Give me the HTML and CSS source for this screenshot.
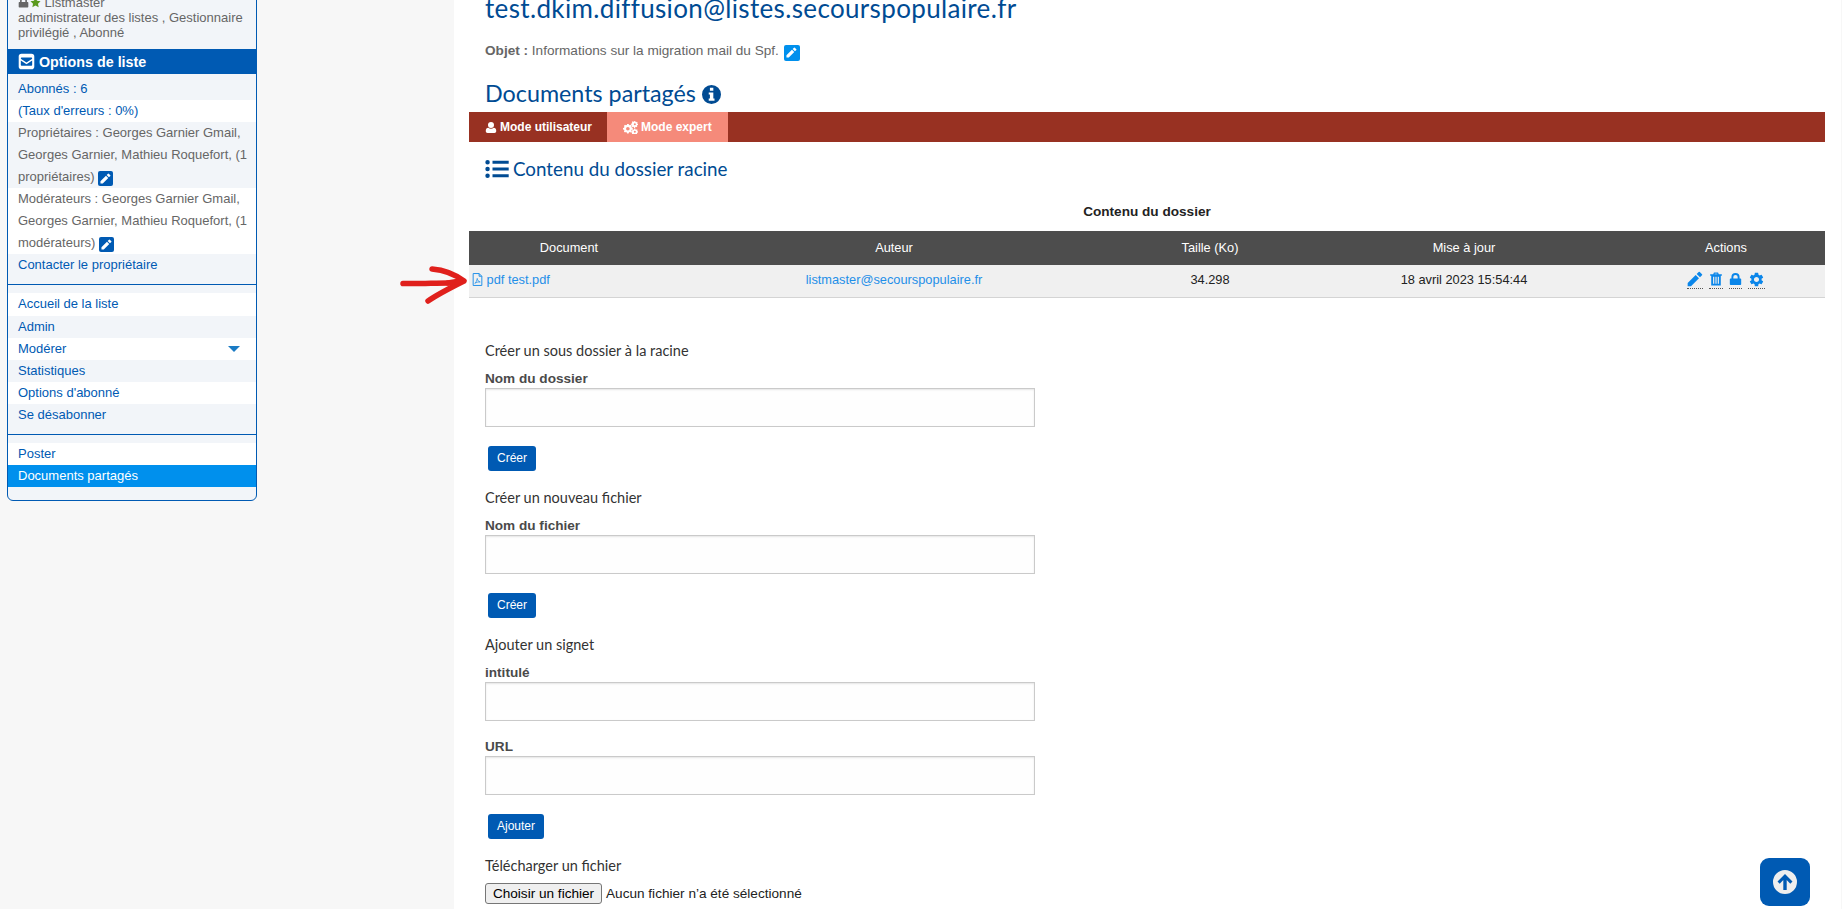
FILE: index.html
```html
<!DOCTYPE html>
<html lang="fr">
<head>
    <meta charset="UTF-8">
    <meta name="viewport" content="width=device-width, initial-scale=1.0">
    <title>Documents partagés</title>
    <link rel="stylesheet" href="styles.css">
</head>
<body>
    <svg class="sprite" xmlns="http://www.w3.org/2000/svg">
        <symbol id="i-pencil" viewBox="0 0 24 24"><path d="M1 18v5h5L18 11l-5-5L1 18zM22.500 6.500a1.200 1.200 0 0 0 0-1.700l-3.300-3.300a1.200 1.200 0 0 0-1.700 0l-3 3 5 5 3-3z"/></symbol>
        <symbol id="i-trash" viewBox="0 0 24 24"><path fill-rule="evenodd" d="M8.500 1h7l1.300 3H22v2.500h-1.800V23H3.800V6.500H2V4h5.200L8.500 1zM10 2.800L9.500 4h5L14 2.800h-4zM7 8v12h2V8H7zm4 0v12h2V8h-2zm4 0v12h2V8h-2z"/></symbol>
        <symbol id="i-lock" viewBox="0 0 24 24"><path fill-rule="evenodd" d="M12 1a7.500 7.500 0 0 1 7.500 7.500V11H21a1.500 1.500 0 0 1 1.500 1.500v9A1.500 1.500 0 0 1 21 23H3a1.500 1.500 0 0 1-1.500-1.500v-9A1.500 1.500 0 0 1 3 11h1.500V8.500A7.500 7.500 0 0 1 12 1zm0 3.500a4 4 0 0 0-4 4V11h8V8.500a4 4 0 0 0-4-4z"/></symbol>
        <symbol id="i-cog" viewBox="0 0 24 24"><path d="M19.140 12.940c.04-.3.06-.61.06-.94 0-.32-.02-.64-.07-.94l2.030-1.580a.49.49 0 0 0 .12-.61l-1.920-3.320a.49.49 0 0 0-.59-.22l-2.390.96c-.5-.38-1.030-.7-1.620-.94l-.36-2.540a.48.48 0 0 0-.48-.41h-3.840c-.24 0-.43.17-.47.41l-.36 2.540c-.59.24-1.130.57-1.620.94l-2.390-.96c-.22-.08-.47 0-.59.22L2.740 8.870c-.12.21-.08.47.12.61l2.030 1.580c-.05.3-.09.63-.09.94s.02.64.07.94l-2.030 1.580a.49.49 0 0 0-.12.61l1.920 3.320c.12.22.37.29.59.22l2.390-.96c.5.38 1.030.7 1.620.94l.36 2.540c.05.24.24.41.48.41h3.840c.24 0 .44-.17.47-.41l.36-2.540c.59-.24 1.130-.56 1.620-.94l2.390.96c.22.08.47 0 .59-.22l1.920-3.320c.12-.22.07-.47-.12-.61l-2.010-1.580zM12 15.600c-1.980 0-3.600-1.620-3.600-3.600s1.620-3.600 3.600-3.600 3.600 1.620 3.600 3.600-1.620 3.600-3.600 3.600z"/></symbol>
        <symbol id="i-cogs" viewBox="0 0 28 24"><path fill-rule="evenodd" d="M10.500 5l.6 1.900 1.600.7 1.800-.9 2 2-.9 1.800.7 1.600 1.900.6v2.800l-1.900.6-.7 1.600.9 1.800-2 2-1.800-.9-1.600.7-.6 1.900H7.700l-.6-1.900-1.600-.7-1.800.9-2-2 .9-1.800-.7-1.600L0 15.800V13l1.900-.6.7-1.600-.9-1.800 2-2 1.800.9 1.600-.7.6-1.900h2.800zM9.100 11a3.400 3.400 0 1 0 0 6.800 3.400 3.400 0 0 0 0-6.800z"/><path fill-rule="evenodd" d="M23 0l.4 1.500 1.300.5 1.300-.8 1.300 1.300-.8 1.300.5 1.300 1 .4v1.800l-1.500.4-.5 1.300.8 1.300-1.300 1.300-1.300-.8-1.300.5-.4 1.500h-1.800l-.4-1.500-1.300-.5-1.300.8-1.300-1.300.8-1.300-.5-1.300-1.500-.4V4.700l1.500-.4.5-1.300-.8-1.300L18.200.4l1.300.8 1.300-.5.4-.7H23zm-.9 4a1.900 1.900 0 1 0 0 3.800 1.900 1.900 0 0 0 0-3.800zM23 14l.4 1.500 1.300.5 1.300-.8 1.300 1.300-.8 1.300.5 1.300 1 .4v1.800l-1.500.4-.5 1.300.8 1.300-1.300 1.300-1.300-.8-1 .2h-3.400l-1-.2-1.300.8-1.300-1.300.8-1.300-.5-1.300-1-.4v-1.800l1.500-.4.5-1.300-.8-1.300 1.300-1.300 1.300.8 1.300-.5.4-1.500H23zm-.9 4a1.900 1.900 0 1 0 0 3.800 1.900 1.900 0 0 0 0-3.800z"/></symbol>
        <symbol id="i-user" viewBox="0 0 24 24"><path d="M12 1a6 6 0 0 1 6 6 6 6 0 0 1-12 0 6 6 0 0 1 6-6zM6.500 12.500C8 14 10 14.700 12 14.700s4-.7 5.500-2.200c2.800.2 5 2.200 5 6.500 0 2.500-1.500 4-3.700 4H5.200C3 23 1.500 21.500 1.500 19c0-4.300 2.200-6.300 5-6.500z"/></symbol>
        <symbol id="i-list" viewBox="0 0 26 20"><path d="M2.500 0a2.500 2.500 0 1 1 0 5 2.500 2.500 0 0 1 0-5zm0 7.500a2.500 2.500 0 1 1 0 5 2.500 2.500 0 0 1 0-5zm0 7.500a2.500 2.500 0 1 1 0 5 2.500 2.500 0 0 1 0-5zM8 .8h18v3.400H8zM8 8.300h18v3.400H8zM8 15.800h18v3.400H8z"/></symbol>
        <symbol id="i-info" viewBox="0 0 24 24"><path fill-rule="evenodd" d="M12 0a12 12 0 1 1 0 24 12 12 0 0 1 0-24zM10 3.500v3.800h4.300V3.500H10zM8.500 9.500v2.400H10V17H8.500v3h7.300v-3h-1.500V9.500H8.500z"/></symbol>
        <symbol id="i-envelope" viewBox="0 0 24 24"><path fill-rule="evenodd" d="M5 1h14a4 4 0 0 1 4 4v14a4 4 0 0 1-4 4H5a4 4 0 0 1-4-4V5a4 4 0 0 1 4-4zm0 5.500c-.6 0-1 .4-1 1 0 .3.100.6.400.8L12 13.500l7.600-5.200c.3-.2.400-.5.400-.8 0-.6-.4-1-1-1H5zM4 10.500V17c0 .6.400 1 1 1h14c.6 0 1-.4 1-1v-6.500l-8 5.500-8-5.500z"/></symbol>
        <symbol id="i-pdf" viewBox="0 0 20 24" fill="none" stroke="currentColor"><path stroke-width="1.800" d="M2 1h11l5 5v17H2zM13 1v5h5"/><path stroke-width="1.400" d="M5 19c2-1 4-5 4.500-9 .6 4 2.500 6 5.500 6.500-3-.3-7 .5-10 2.500z"/></symbol>
        <symbol id="i-star" viewBox="0 0 24 24"><path d="M12 1l3.400 7.300 7.600 1-5.600 5.300 1.500 8L12 18.700 5.100 22.600l1.500-8L1 9.300l7.600-1z"/></symbol>
        <symbol id="i-up" viewBox="0 0 24 24"><path fill-rule="evenodd" d="M12 0a12 12 0 1 1 0 24 12 12 0 0 1 0-24zm0 4L4.500 11.500l2.200 2.200 3.600-3.600V20h3.400v-9.900l3.600 3.600 2.200-2.200L12 4z"/></symbol>
    </svg>

    <aside class="left-col">
        <div class="side-box">
            <div class="side-role">
                <div class="role-name">
                    <svg class="icon icon-grey"><use href="#i-lock"/></svg><svg class="icon icon-green"><use href="#i-star"/></svg> Listmaster
                </div>
                administrateur des listes , Gestionnaire privilégié , Abonné
            </div>
            <div class="side-title">
                <svg class="icon-title"><use href="#i-envelope"/></svg>
                Options de liste
            </div>
            <ul class="side-list side-list-first">
                <li><a href="#">Abonnés : 6</a></li>
                <li class="row-white"><a href="#">(Taux d'erreurs : 0%)</a></li>
                <li>Propriétaires : Georges Garnier Gmail, Georges Garnier, Mathieu Roquefort, (1 propriétaires) <span class="edit-btn"><svg><use href="#i-pencil"/></svg></span></li>
                <li class="row-white">Modérateurs : Georges Garnier Gmail, Georges Garnier, Mathieu Roquefort, (1 modérateurs) <span class="edit-btn"><svg><use href="#i-pencil"/></svg></span></li>
                <li class="last-row"><a href="#">Contacter le propriétaire</a></li>
            </ul>
            <ul class="side-list">
                <li class="row-white row-tall"><a href="#">Accueil de la liste</a></li>
                <li><a href="#">Admin</a></li>
                <li class="row-white has-caret"><a href="#">Modérer</a><span class="caret"></span></li>
                <li><a href="#">Statistiques</a></li>
                <li class="row-white"><a href="#">Options d'abonné</a></li>
                <li class="last-row"><a href="#">Se désabonner</a></li>
            </ul>
            <ul class="side-list side-list-end">
                <li class="row-white"><a href="#">Poster</a></li>
                <li class="active"><a href="#">Documents partagés</a></li>
            </ul>
        </div>
    </aside>

    <main class="content">
        <div class="indent">
            <h1>test.dkim.diffusion@listes.secourspopulaire.fr</h1>
            <p class="subject"><b>Objet :</b> Informations sur la migration mail du Spf. <span class="edit-btn edit-light"><svg><use href="#i-pencil"/></svg></span></p>
            <h2>Documents partagés <svg class="icon-info"><use href="#i-info"/></svg></h2>
        </div>

        <nav class="mode-bar">
            <a href="#" class="mode-tab"><svg class="icon-user"><use href="#i-user"/></svg> Mode utilisateur</a>
            <a href="#" class="mode-tab mode-active"><svg class="icon-cogs"><use href="#i-cogs"/></svg> Mode expert</a>
        </nav>

        <h3 class="indent"><svg class="icon-list"><use href="#i-list"/></svg> Contenu du dossier racine</h3>

        <table class="docs">
            <caption>Contenu du dossier</caption>
            <thead>
                <tr>
                    <th class="col-doc">Document</th>
                    <th class="col-author">Auteur</th>
                    <th class="col-size">Taille (Ko)</th>
                    <th class="col-date">Mise à jour</th>
                    <th class="col-actions">Actions</th>
                </tr>
            </thead>
            <tbody>
                <tr>
                    <td class="cell-doc"><a href="#"><svg class="icon-pdf"><use href="#i-pdf"/></svg> pdf test.pdf</a></td>
                    <td><a href="#">listmaster@secourspopulaire.fr</a></td>
                    <td>34.298</td>
                    <td>18 avril 2023 15:54:44</td>
                    <td>
                        <div class="actions">
                            <a href="#"><svg class="act-pencil"><use href="#i-pencil"/></svg></a>
                            <a href="#"><svg class="act-trash"><use href="#i-trash"/></svg></a>
                            <a href="#"><svg class="act-lock"><use href="#i-lock"/></svg></a>
                            <a href="#"><svg class="act-cog"><use href="#i-cog"/></svg></a>
                        </div>
                    </td>
                </tr>
            </tbody>
        </table>

        <div class="indent forms">
            <form class="form-block">
                <div class="legend">Créer un sous dossier à la racine</div>
                <label>Nom du dossier</label>
                <input type="text">
                <button type="button" class="btn">Créer</button>
            </form>
            <form class="form-block">
                <div class="legend">Créer un nouveau fichier</div>
                <label>Nom du fichier</label>
                <input type="text">
                <button type="button" class="btn">Créer</button>
            </form>
            <form class="form-block">
                <div class="legend">Ajouter un signet</div>
                <label>intitulé</label>
                <input type="text">
                <label class="label-next">URL</label>
                <input type="text">
                <button type="button" class="btn">Ajouter</button>
            </form>
            <form class="form-block">
                <div class="legend">Télécharger un fichier</div>
                <div class="file-row"><span class="file-btn">Choisir un fichier</span> Aucun fichier n’a été sélectionné</div>
            </form>
        </div>
    </main>

    <svg class="arrow" viewBox="0 0 68 38" fill="none" stroke="#e0201c" stroke-width="5.500" stroke-linecap="round" stroke-linejoin="round">
        <path d="M3 17.500C18 18 34 17 48 17"/>
        <path d="M32 3C44 4 56 9 64 15C52 21 38 28 28 35"/>
        <path d="M48 17L60 15"/>
    </svg>

    <a href="#" class="to-top"><svg><use href="#i-up"/></svg></a>
</body>
</html>
```

FILE: styles.css
```css
body {
    margin: 0;
    height: 909px;
    overflow: hidden;
    display: flex;
    background-color: #f7f7f7;
    font-family: "Liberation Sans", Arial, sans-serif;
    font-size: 13px;
    color: #666666;
}

a {
    color: #005ab3;
    text-decoration: none;
}

.sprite {
    display: none;
}

/* left column */
.left-col {
    width: 454px;
    flex: none;
}

.side-box {
    box-sizing: border-box;
    width: 250px;
    height: 514px;
    margin: -13px 0 0 7px;
    background-color: #f2f5f9;
    border: 1px solid #005ab3;
    border-radius: 0 0 6px 6px;
}

.side-role {
    height: 61px;
    padding: 7px 10px 0;
    box-sizing: border-box;
    line-height: 15px;
    color: #666666;
}

.role-name {
    height: 15px;
    white-space: nowrap;
}

.icon {
    width: 11px;
    height: 11px;
    vertical-align: -1px;
}

.icon-grey {
    fill: #666666;
}

.icon-green {
    fill: #5a9a1e;
    margin-left: 1px;
}

.side-title {
    display: flex;
    align-items: center;
    gap: 4px;
    height: 25px;
    padding-left: 10px;
    background-color: #005ab3;
    color: #ffffff;
    font-size: 14.3px;
    font-weight: bold;
}

.icon-title {
    width: 17px;
    height: 17px;
    fill: #ffffff;
}

.side-list {
    list-style: none;
    margin: 0;
    padding: 0;
    border-bottom: 1px solid #005ab3;
}

.side-list li {
    padding: 0 5px 0 10px;
    line-height: 22px;
}

.side-list .row-white {
    background-color: #ffffff;
}

.side-list .row-tall {
    padding-bottom: 1px;
}

.side-list + .side-list {
    padding-top: 8px;
}

.side-list-first li:first-child {
    padding-top: 4px;
}

.side-list .last-row {
    padding-bottom: 8px;
}

.side-list-end {
    border-bottom: none;
}

.side-list .has-caret {
    display: flex;
    justify-content: space-between;
    align-items: center;
}

.caret {
    width: 0;
    height: 0;
    margin-right: 11px;
    border-left: 6px solid transparent;
    border-right: 6px solid transparent;
    border-top: 6px solid #1a7bc4;
}

.side-list .active {
    background-color: #0090ed;
}

.side-list .active a {
    color: #ffffff;
}

.edit-btn {
    display: inline-flex;
    align-items: center;
    justify-content: center;
    width: 15px;
    height: 15px;
    vertical-align: -3px;
    background-color: #005ab3;
    border-radius: 2px;
}

.edit-btn svg {
    width: 11px;
    height: 11px;
    fill: #ffffff;
}

.edit-light {
    background-color: #0090ed;
}

/* main column */
.content {
    flex: 1;
    min-width: 0;
    margin-top: -8px;
    margin-right: 1px;
    padding: 0 16px 0 15px;
    background-color: #ffffff;
}

.indent {
    padding-left: 16px;
}

h1, h2, h3 {
    margin: 0;
    font-family: "Lato", "Open Sans", sans-serif;
    font-weight: 400;
    color: #004b93;
}

h1 {
    font-size: 26px;
    line-height: 32px;
    letter-spacing: 0.35px;
    white-space: nowrap;
}

.subject {
    margin: 17px 0 0;
    line-height: 20px;
    font-size: 13.6px;
}

.subject .edit-btn {
    width: 16px;
    height: 16px;
    margin-left: 1px;
}

h2 {
    margin-top: 17px;
    font-size: 23.3px;
    line-height: 30px;
}

.icon-info {
    width: 19px;
    height: 19px;
    fill: #004b93;
    vertical-align: -2px;
}

.mode-bar {
    display: flex;
    height: 30px;
    margin-top: 4px;
    background-color: #983122;
}

.mode-tab {
    display: flex;
    align-items: center;
    gap: 3px;
    box-sizing: border-box;
    padding-left: 16px;
    width: 138px;
    color: #ffffff;
    font-weight: bold;
    font-size: 12px;
}

.mode-active {
    width: 121px;
    background-color: #f58a7a;
}

.icon-user {
    width: 12px;
    height: 13px;
    fill: #ffffff;
}

.icon-cogs {
    width: 15px;
    height: 13px;
    fill: #ffffff;
}

h3 {
    margin-top: 14px;
    font-size: 18.8px;
    line-height: 26px;
    display: flex;
    align-items: center;
    gap: 4px;
}

.icon-list {
    width: 24px;
    height: 18px;
    fill: #004b93;
}

.docs {
    width: 100%;
    margin-top: 19px;
    border-collapse: collapse;
    table-layout: fixed;
    color: #222222;
    font-size: 12.8px;
}

.docs caption {
    height: 30px;
    line-height: 22px;
    font-weight: bold;
    font-size: 13.6px;
    color: #222222;
}

.docs th {
    box-sizing: border-box;
    height: 34px;
    padding: 0 0 2px;
    background-color: #4d4d4d;
    color: #ffffff;
    font-weight: normal;
}

.docs td {
    box-sizing: border-box;
    height: 32px;
    padding: 0 0 2px;
    text-align: center;
    background-color: #f0f0f0;
    border-bottom: 1px solid #d4d4d4;
}

.docs a {
    color: #1f8fe8;
}

.col-doc { width: 200px; }
.col-author { width: 450px; }
.col-size { width: 182px; }
.col-date { width: 326px; }
.col-actions { width: 198px; }

.docs .cell-doc {
    text-align: left;
    padding-left: 3px;
}

.icon-pdf {
    width: 11px;
    height: 13px;
    vertical-align: -2px;
    color: #1f8fe8;
}

.actions {
    display: flex;
    justify-content: center;
    gap: 6px;
}

.actions a {
    display: flex;
    height: 17px;
    border-bottom: 1px dotted #555555;
}

.actions svg {
    fill: #0a86ea;
}

.act-pencil { width: 16px; height: 16px; }
.act-trash { width: 14px; height: 16px; }
.act-lock { width: 13px; height: 16px; }
.act-cog { width: 17px; height: 17px; }

.forms {
    margin-top: 43px;
}

.form-block {
    margin-bottom: 17px;
}

.legend {
    font-family: "Lato", "Open Sans", sans-serif;
    font-size: 14.5px;
    line-height: 20px;
    color: #333333;
}

.form-block label {
    display: block;
    margin-top: 9px;
    line-height: 18px;
    font-weight: bold;
    font-size: 13.6px;
    color: #4a4a4a;
}

.form-block .label-next {
    margin-top: 17px;
}

.form-block input {
    display: block;
    box-sizing: border-box;
    width: 550px;
    height: 39px;
    margin: 0;
    background-color: #fefefe;
    border: 1px solid #cacaca;
    box-shadow: inset 0 1px 2px rgba(0, 0, 0, 0.1);
}

.btn {
    display: block;
    height: 25px;
    margin: 19px 0 0 3px;
    padding: 0 9px;
    background-color: #005ab3;
    color: #ffffff;
    border: none;
    border-radius: 3px;
    font-family: "Liberation Sans", Arial, sans-serif;
    font-size: 12px;
}

.file-row {
    margin-top: 7px;
    font-size: 13.6px;
    color: #222222;
    line-height: 21px;
    white-space: nowrap;
}

.file-btn {
    display: inline-block;
    box-sizing: border-box;
    width: 117px;
    height: 21px;
    margin-right: 1px;
    line-height: 19px;
    text-align: center;
    background-color: #efefef;
    border: 1px solid #767676;
    border-radius: 3px;
    color: #000000;
}

/* things lying over the page */
.arrow {
    position: absolute;
    left: 400px;
    top: 266px;
    width: 68px;
    height: 38px;
}

.to-top {
    position: fixed;
    left: 1760px;
    top: 858px;
    display: flex;
    align-items: center;
    justify-content: center;
    width: 50px;
    height: 48px;
    background-color: #005ab3;
    border-radius: 9px;
}

.to-top svg {
    width: 24px;
    height: 24px;
    fill: #eeeeee;
}
```
